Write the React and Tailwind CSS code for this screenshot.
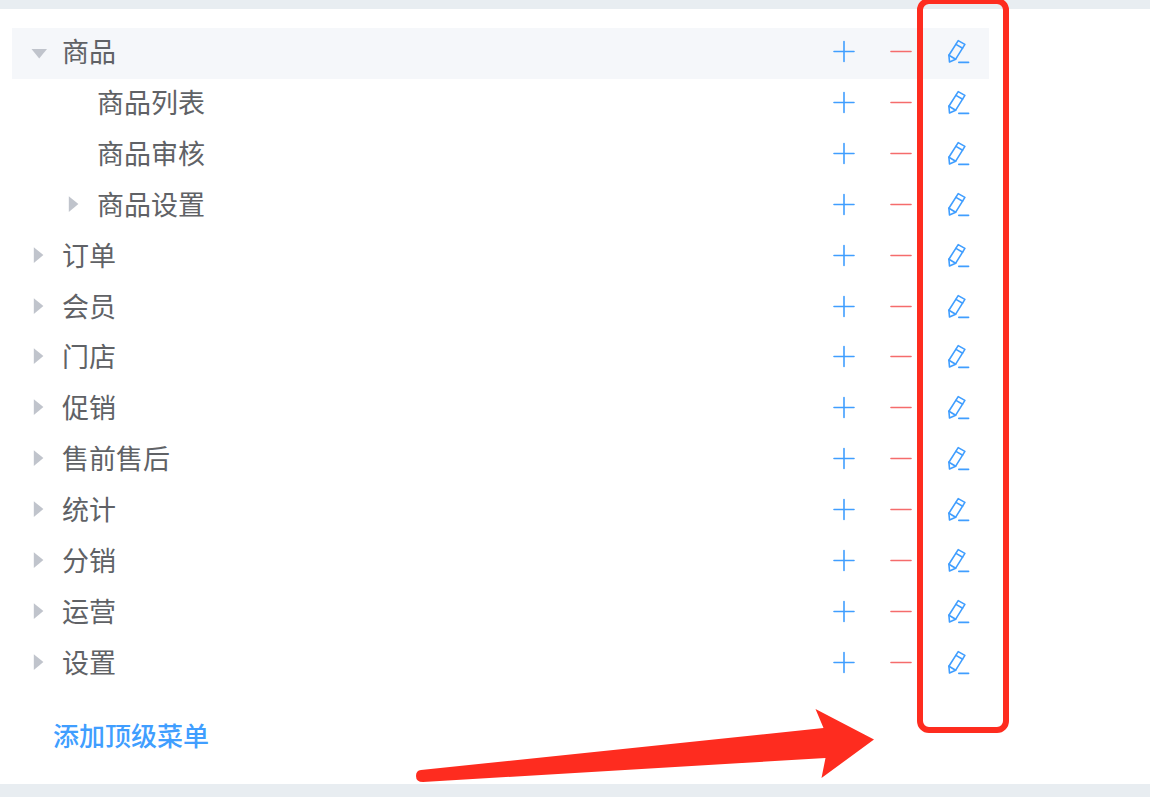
import { useState } from 'react';

const menus = [
  { id: 1, name: '商品', level: 1, expanded: true },
  { id: 2, name: '商品列表', level: 2, leaf: true },
  { id: 3, name: '商品审核', level: 2, leaf: true },
  { id: 4, name: '商品设置', level: 2 },
  { id: 5, name: '订单', level: 1 },
  { id: 6, name: '会员', level: 1 },
  { id: 7, name: '门店', level: 1 },
  { id: 8, name: '促销', level: 1 },
  { id: 9, name: '售前售后', level: 1 },
  { id: 10, name: '统计', level: 1 },
  { id: 11, name: '分销', level: 1 },
  { id: 12, name: '运营', level: 1 },
  { id: 13, name: '设置', level: 1 },
];

function Caret({ leaf, expanded }) {
  return (
    <svg className="h-4 w-4 shrink-0 fill-[#c0c4cc]" viewBox="0 0 16 16" aria-hidden="true">
      {!leaf && <path d={expanded ? 'M0.5 6h15.5L8.2 15.5z' : 'M2.8 0.3v15.6L12.4 8z'} />}
    </svg>
  );
}

function ActionButton({ label, className, children }) {
  return (
    <button type="button" aria-label={label} className={className}>
      <svg
        className="block h-[22px] w-[22px] overflow-visible"
        viewBox="0 0 22 22"
        fill="none"
        stroke="currentColor"
        strokeWidth="1.6"
        strokeLinecap="round"
        strokeLinejoin="round"
      >
        {children}
      </svg>
    </button>
  );
}

function MenuRow({ menu, active, onSelect }) {
  return (
    <li
      role="treeitem"
      aria-level={menu.level}
      aria-expanded={menu.leaf ? undefined : Boolean(menu.expanded)}
      aria-selected={active}
      onClick={onSelect}
      className={`flex items-center justify-between pr-5 pb-1 ${menu.level === 2 ? 'pl-[54px]' : 'pl-[19px]'} ${active ? 'bg-[#f5f7fa]' : ''}`}
    >
      <div className="flex items-center gap-[15px]">
        <Caret leaf={menu.leaf} expanded={menu.expanded} />
        <span className="text-[27px] leading-10 text-[#606266]">{menu.name}</span>
      </div>
      <div className="flex items-center gap-[35px]">
        <ActionButton label={`添加${menu.name}`} className="text-[#409eff]">
          <path d="M11 1.500v20M1 11.500h20" />
        </ActionButton>
        <ActionButton label={`删除${menu.name}`} className="text-[#f56c6c]">
          <path d="M1 11.500h20" />
        </ActionButton>
        <ActionButton label={`编辑${menu.name}`} className="text-[#409eff]">
          <path d="M11.200 0.600L17.900 4.400L8.700 19.200L2.500 22L1.900 15.200z" />
          <path d="M9 4.400L15.600 8.200M1.900 15.200L8.700 19.200" />
          <path d="M11.800 22.400h9.800" />
        </ActionButton>
      </div>
    </li>
  );
}

export default function App() {
  const [activeId, setActiveId] = useState(1);

  return (
    <main className="relative flex min-h-screen flex-col overflow-hidden bg-[#e8edf1] pt-[9px] pb-[13px] font-['Noto_Sans_CJK_SC',sans-serif]">
      <section className="flex-1 bg-white pt-[19px]">
        <ul role="tree" className="mr-[161px] ml-3 grid min-h-[661px] auto-rows-fr">
          {menus.map((menu) => (
            <MenuRow
              key={menu.id}
              menu={menu}
              active={menu.id === activeId}
              onSelect={() => setActiveId(menu.id)}
            />
          ))}
        </ul>
        <button type="button" className="mt-[26px] ml-[53px] block text-[26px] leading-10 font-medium text-[#409eff]">
          添加顶级菜单
        </button>
      </section>

      {/* highlight around the edit column */}
      <div className="pointer-events-none absolute -top-0.5 right-[141px] bottom-16 w-[92px] rounded-xl border-6 border-[#fe2c1f]" />
      <svg
        className="pointer-events-none absolute right-[276px] bottom-[15px] h-[73px] w-[458px] fill-[#fe2c1f]"
        viewBox="0 0 458 73"
        aria-hidden="true"
      >
        <path d="M5 61L407.500 19L399.500 0L458 30.500L405.500 69L409.500 49L7 73Q0 73 0 67Q0 61.500 5 61z" />
      </svg>
    </main>
  );
}
